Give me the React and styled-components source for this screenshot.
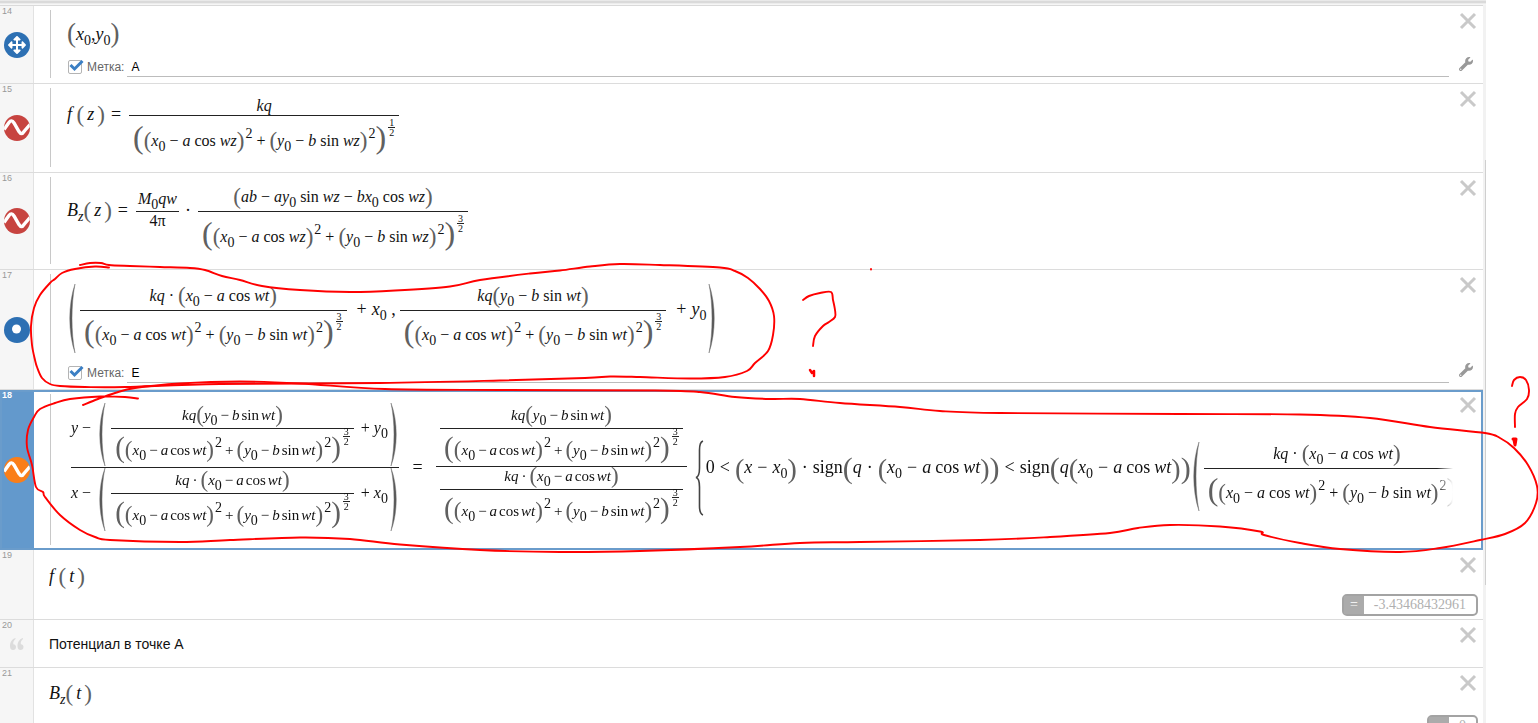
import React from "react";
import styled, { createGlobalStyle, css } from "styled-components";
import { FaArrowsAlt, FaWrench } from "react-icons/fa";

const GlobalStyle = createGlobalStyle`
  * { box-sizing: border-box; }
  body { margin: 0; background: #fff; font-family: "Liberation Sans", Arial, sans-serif; }
`;

/* ---------- page ---------- */

const Page = styled.div`
  position: relative;
  height: 100vh;
  overflow: hidden;
  display: grid;
  grid-template-columns: minmax(0, 1fr) 3px 52px;
  grid-template-rows: 5px 1fr;
`;

const TopEdge = styled.div`
  background: linear-gradient(#e9e9e9 0 1px, #dadada 1px 3px, #ececec 3px 4px, #f6f6f6 4px);
  grid-column: 1 / 3;
`;

const List = styled.ol`
  list-style: none;
  margin: 0;
  padding: 0;
  grid-column: 1;
  border-top: 1px solid #dadada;
`;

const ScrollTrack = styled.div`
  background: #f2f2f2;
`;

const ScrollThumb = styled.div`
  margin: 155px 0 0 2px;
  width: 1px;
  height: 425px;
  background: #cfcfcf;
`;

const Row = styled.li`
  display: grid;
  grid-template-columns: 34px minmax(0, 1fr) 30px;
  grid-template-rows: 1fr auto;
  min-height: ${(p) => p.$h}px;
  border-bottom: ${(p) => (p.$last || p.$active ? "none" : "1px solid #dcdcdc")};
  ${(p) =>
    p.$active &&
    css`
      outline: 2px solid #6a9ccb;
      outline-offset: -2px;
    `}
`;

const Gutter = styled.div`
  grid-row: 1 / 3;
  display: grid;
  grid-template-rows: 1fr auto 1fr;
  justify-items: center;
  background: ${(p) => (p.$active ? "#6399cc" : "#f6f6f6")};
  border-right: 1px solid ${(p) => (p.$active ? "#6399cc" : "#e2e2e2")};
  color: ${(p) => (p.$active ? "#fff" : "#999")};
  font-weight: ${(p) => (p.$active ? "bold" : "normal")};
`;

const Num = styled.span`
  justify-self: start;
  padding-left: 2px;
  font-size: 9px;
  line-height: 10px;
`;

const Badge = styled.button`
  width: 26px;
  height: 26px;
  padding: 0;
  border: none;
  border-radius: 50%;
  background: ${(p) => p.$color};
  color: #fff;
  display: flex;
  align-items: center;
  justify-content: center;
  overflow: hidden;
`;

const Body = styled.div`
  grid-column: 2;
  display: flex;
  flex-direction: column;
  margin: ${(p) => (p.$folder ? "4px 0 5px 16px" : "0 0 0 15px")};
  padding: ${(p) => p.$pad}px 0 0 ${(p) => (p.$folder ? 16 : 0)}px;
  border-left: ${(p) => (p.$folder ? "1px solid #c8c8c8" : "none")};
  overflow: hidden;
  ${(p) => p.$fade && css`mask-image: linear-gradient(to left, transparent, #000 16px);`}
`;

const Tools = styled.div`
  grid-column: 3;
  grid-row: 1;
  display: flex;
  flex-direction: column;
  justify-content: space-between;
  align-items: flex-start;
  padding: 6px 0 10px 6px;
`;

const IconButton = styled.button`
  border: none;
  background: none;
  padding: 0;
  width: ${(p) => p.$w || 18}px;
  height: 18px;
  display: flex;
  align-items: center;
  justify-content: center;
  color: ${(p) => p.$color};
`;

const LabelLine = styled.div`
  display: flex;
  align-items: center;
  height: 20px;
  margin: auto 4px 1px 1px;
`;

const CheckLabel = styled.label`
  display: flex;
  align-items: center;
  gap: 5px;
  font-size: 12px;
  color: #666;
`;

const Check = styled.input`
  appearance: none;
  margin: 0;
  width: 14px;
  height: 14px;
  border: 1px solid #b4b4b4;
  border-radius: 2px;
  background: #fff;
`;

const CheckBox = styled.span`
  position: relative;
  display: flex;
  svg { position: absolute; left: 1px; top: 0; pointer-events: none; }
`;

const NameInput = styled.input`
  flex: 1;
  height: 20px;
  margin-left: 3px;
  padding: 0 4px;
  border: none;
  border-bottom: 1px solid #bcbcbc;
  background: none;
  font: 12px "Liberation Sans", Arial, sans-serif;
  color: #000;
`;

const Result = styled.output`
  grid-column: 2 / 4;
  justify-self: end;
  display: flex;
  height: 22px;
  margin: 0 5px 3px 0;
  border: 2px solid #a3a3a3;
  border-radius: 5px;
  font: 14px/18px "Liberation Serif", serif;
  color: #b0b0b0;
`;

const Equals = styled.span`
  width: 20px;
  background: #ababab;
  color: #fff;
  text-align: center;
`;

const ResultValue = styled.span`
  padding: 0 10px;
`;

const Note = styled.p`
  margin: 0;
  font-size: 14px;
  line-height: 18px;
  color: #111;
`;

/* ---------- math ---------- */

const MathLine = styled.div`
  --op: 5px;
  --fn: 4px;
  white-space: nowrap;
  font: 18px/20px "Liberation Serif", "Times New Roman", serif;
  color: #111;
`;

const V = styled.i``;

const Arg = styled.i`
  margin: 0 3px;
`;

const Fn = styled.span`
  margin: 0 var(--fn);
`;

const Op = styled.span`
  margin: 0 var(--op);
`;

const Rel = styled.span`
  margin: 0 ${(p) => p.$r || 8}px 0 ${(p) => p.$l || 6}px;
`;

const Sub = styled.span`
  font-size: 14px;
  line-height: 0;
  vertical-align: -5px;
`;

const Sup = styled.span`
  font-size: 14px;
  line-height: 0;
  vertical-align: 8px;
  margin-left: 1px;
`;

const P = styled.span`
  font-size: ${(p) => p.$s || 23}px;
  line-height: 0;
  vertical-align: ${(p) => p.$v || -2}px;
  color: #606060;
`;

const FracBox = styled.span`
  --op: ${(p) => (p.$size < 16 ? 3 : 4)}px;
  --fn: ${(p) => (p.$size < 16 ? 2 : 4)}px;
  display: inline-grid;
  font-size: ${(p) => p.$size}px;
  line-height: 16px;
  text-align: center;
  vertical-align: ${(p) => p.$raise}px;
  margin: 0 ${(p) => p.$gap}px;
`;

const Top = styled.span`
  padding: 0 ${(p) => p.$side}px ${(p) => p.$pad}px;
  border-bottom: 1px solid #222;
`;

const Bottom = styled.span`
  padding: ${(p) => p.$pad}px ${(p) => p.$side}px 0;
`;

const PowerBox = styled.span`
  display: inline-grid;
  font-size: 10px;
  line-height: 9px;
  vertical-align: 20px;
  margin: -20px 0 -20px 2px;
`;

const PowerTop = styled.span`
  padding: 0 1px;
  border-bottom: 1px solid #222;
`;

const Tall = styled.svg`
  display: inline-block;
  vertical-align: ${(p) => p.$v}px;
  margin: ${(p) => p.$m || "0 2px"};
`;

function Frac({ num, den, up = 9, down = 30, size = 16, gap = 0, side = 4 }) {
  return (
    <FracBox $size={size} $raise={up + 5} $gap={gap}>
      <Top $pad={up - 3} $side={side}>{num}</Top>
      <Bottom $pad={down - 13} $side={side}>{den}</Bottom>
    </FracBox>
  );
}

function NestedFrac({ num, den, raise, above, below, side = 0 }) {
  return (
    <FracBox $size={16} $raise={raise} $gap={4}>
      <Top $pad={above} $side={side}>{num}</Top>
      <Bottom $pad={below} $side={side}>{den}</Bottom>
    </FracBox>
  );
}

function Power({ n }) {
  return (
    <PowerBox>
      <PowerTop>{n}</PowerTop>
      <span>2</span>
    </PowerBox>
  );
}

function TallParen({ h, v, right, m }) {
  const d = `M6 0C-1 ${h * 0.3} -1 ${h * 0.7} 6 ${h}C2 ${h * 0.7} 2 ${h * 0.3} 6 0Z`;
  return (
    <Tall width="7" height={h} $v={v} $m={m} role="img" aria-label={right ? ")" : "("}>
      <path d={d} fill="#555" stroke="#777" strokeWidth=".5" transform={right ? "matrix(-1 0 0 1 7 0)" : undefined} />
    </Tall>
  );
}

function Brace() {
  return (
    <Tall width="9" height="76" $v={-43} $m="0 2px 0 4px" role="img" aria-label="{">
      <path d="M8 1C5 2 4.500 5 4.500 10V28C4.500 34 3 37 1 37.500C3 38 4.500 41 4.500 47V66C4.500 71 5 74 8 75" fill="none" stroke="#444" strokeWidth="1.600" />
    </Tall>
  );
}

const X0 = () => (<><V>x</V><Sub>0</Sub></>);
const Y0 = () => (<><V>y</V><Sub>0</Sub></>);
const XDiff = ({ v }) => (<><X0 /><Op>−</Op><V>a</V><Fn>cos</Fn><V>w{v}</V></>);
const YDiff = ({ v }) => (<><Y0 /><Op>−</Op><V>b</V><Fn>sin</Fn><V>w{v}</V></>);

function Distance({ v, n, small }) {
  const outer = small ? 29 : 32;
  return (
    <>
      <P $s={outer}>(</P><P>(</P><XDiff v={v} /><P>)</P><Sup>2</Sup>
      <Op>+</Op>
      <P>(</P><YDiff v={v} /><P>)</P><Sup>2</Sup><P $s={outer}>)</P><Power n={n} />
    </>
  );
}

const KqX = () => (<><V>kq</V><Op>·</Op><P>(</P><XDiff v="t" /><P>)</P></>);
const KqY = () => (<><V>kq</V><P>(</P><YDiff v="t" /><P>)</P></>);

const FieldX = ({ small, gap }) => (
  <Frac num={<KqX />} den={<Distance v="t" n="3" small={small} />} size={small ? 15 : 16} up={small ? 8 : 9} down={small ? 26 : 29} gap={gap} />
);
const FieldY = ({ small, gap }) => (
  <Frac num={<KqY />} den={<Distance v="t" n="3" small={small} />} size={small ? 15 : 16} up={small ? 8 : 9} down={small ? 26 : 29} gap={gap} />
);

/* ---------- icons ---------- */

const Wave = () => (
  <svg width="26" height="26" viewBox="0 0 26 26" aria-hidden="true">
    <path d="M0 14.500L5 7.500Q7.500 4 10 8L15 16.500Q17.500 20.500 20 16.500L26 9.500" fill="none" stroke="#fff" strokeWidth="3.400" />
  </svg>
);

const Point = () => (
  <svg width="26" height="26" aria-hidden="true"><circle cx="12.500" cy="12" r="4.500" fill="#fff" /></svg>
);

const Quote = () => (
  <svg width="14" height="12" viewBox="0 0 14 12" aria-hidden="true">
    <path d="M5.500 0C2 1 0 4 0 8C0 10.500 1 12 3 12C4.800 12 6 10.700 6 9C6 7.300 4.900 6.200 3.300 6.200C3 4 4 2 5.500 1ZM13 0C9.500 1 7.500 4 7.500 8C7.500 10.500 8.500 12 10.500 12C12.300 12 13.500 10.700 13.500 9C13.500 7.300 12.400 6.200 10.800 6.200C10.500 4 11.500 2 13 1Z" fill="#dcdcdc" />
  </svg>
);

const Cross = () => (
  <svg width="18" height="18" viewBox="0 0 18 18" aria-hidden="true">
    <path d="M2 2L16 16M16 2L2 16" stroke="currentColor" strokeWidth="3" />
  </svg>
);

const Tick = () => (
  <svg width="15" height="12" viewBox="0 0 15 12" aria-hidden="true">
    <path d="M1.500 5L5.500 9L13.500 1" fill="none" stroke="#3b7fc4" strokeWidth="3" />
  </svg>
);

/* ---------- rows ---------- */

function PointLabel({ id, value }) {
  return (
    <LabelLine>
      <CheckLabel>
        <CheckBox><Check type="checkbox" defaultChecked /><Tick /></CheckBox>
        Метка:
      </CheckLabel>
      <NameInput id={id} aria-label="Метка" defaultValue={value} />
    </LabelLine>
  );
}

function Expression({ n, h, pad, icon, color, folder, fade, active, last, wrench, result, children }) {
  return (
    <Row $h={h} $active={active} $last={last}>
      <Gutter $active={active}>
        <Num>{n}</Num>
        {color ? <Badge $color={color} aria-label={"Expression " + n}>{icon}</Badge> : icon}
      </Gutter>
      <Body $folder={folder} $pad={pad} $fade={fade}>{children}</Body>
      <Tools>
        <IconButton $color="#c9c9c9" aria-label="Close"><Cross /></IconButton>
        {wrench && <IconButton $w={14} $color="#999" aria-label="Settings"><FaWrench size={16} /></IconButton>}
      </Tools>
      {result && <Result><Equals>=</Equals><ResultValue>{result}</ResultValue></Result>}
    </Row>
  );
}

/* ---------- freehand notes ---------- */

const Ink = styled.svg`
  position: absolute;
  left: 0;
  top: 0;
  pointer-events: none;
`;

const strokes = [
  [[80,265],[90,263],[101,263],[109,265],[130,266],[160,267],[190,268],[205,270],[222,276],[240,280],[262,286],[300,290],[350,292],[395,290.5],[450,286.5],[480,280],[530,273.5],[560,270.5],[590,266.5],[620,264],[660,265],[720,267.5],[735,271],[748,278],[760,289],[769,301],[774,316],[773,335],[768,351],[755,363],[747,371],[725,377],[690,378.5],[640,377],[610,376.5],[585,378],[500,380.5],[380,383],[220,384],[125,387],[85,387],[60,386],[50,384],[42,378],[37,367],[35,360],[32,345],[31,326],[34,308],[40,295],[50,283],[55,279],[62,273],[75,269],[95,266.5],[109,267.5]],
  [[83,405],[98,399],[115,393],[135,388],[180,383.5],[240,381.5],[300,383.5],[385,389],[500,390],[655,390.5],[700,392],[735,397],[770,399],[800,399],[840,403],[900,407],[940,411],[1000,413],[1180,414],[1300,414.5],[1370,418],[1430,427],[1485,433],[1500,438],[1514,448],[1528,465],[1537,486],[1536,503],[1525,523],[1505,534],[1480,540],[1440,548],[1400,552],[1340,549],[1300,543],[1264,535],[1260,531.5],[1220,526.5],[1170,525],[1138,528],[1110,533],[1050,537],[980,540],[860,542],[800,543],[740,547],[640,551],[560,552],[480,550],[400,544.5],[350,539],[300,537.5],[230,540],[180,542],[110,540],[95,537],[80,530],[60,515],[45,497],[43,492],[36,487],[32,465],[27,447],[28,430],[34,417],[40,409],[55,403],[70,399],[100,396.5],[125,397],[138,398.5]],
  [[803,300],[809,296],[820,293],[831,292],[833,300],[835,310],[835,317],[829,322],[823,326],[815,336],[813,346]],
  [[1512,386],[1514,380],[1520,377],[1526,380],[1529,390],[1527,399],[1518,407],[1515,414],[1515,427]],
];

const curve = (pts) =>
  pts.reduce((d, p, i) => {
    if (i === 0) return `M${p[0]} ${p[1]}`;
    const a = pts[i - 1];
    const z = pts[i - 2] || a;
    const n = pts[i + 1] || p;
    return `${d}C${a[0] + (p[0] - z[0]) / 6} ${a[1] + (p[1] - z[1]) / 6} ${p[0] - (n[0] - a[0]) / 6} ${p[1] - (n[1] - a[1]) / 6} ${p[0]} ${p[1]}`;
  }, "");

function Notes() {
  return (
    <Ink width="1538" height="723" viewBox="0 0 1538 723" fill="none" stroke="#f00" strokeWidth="1.900" strokeLinecap="round" strokeLinejoin="round" aria-hidden="true">
      {strokes.map((s, i) => <path key={i} d={curve(s)} />)}
      <path d="M810 370L812 373L814 371L814 376" strokeWidth="2.500" />
      <path d="M1513 439L1516 439L1515 445L1514 440" strokeWidth="3" />
      <path d="M871 269V269.500" />
    </Ink>
  );
}

export default function App() {
  return (
    <>
      <GlobalStyle />
      <Page>
        <TopEdge />
        <List>
          <Expression n="14" h={78} pad={14} folder wrench color="#2d70b3" icon={<FaArrowsAlt size={18} />}>
            <MathLine><P $s={27}>(</P><X0 />,<Y0 /><P $s={27}>)</P></MathLine>
            <PointLabel id="label-a" value="A" />
          </Expression>
          <Expression n="15" h={89} pad={10} folder color="#c74440" icon={<Wave />}>
            <MathLine>
              <V>f</V> <P>(</P><Arg>z</Arg><P>)</P><Rel>=</Rel>
              <Frac num={<V>kq</V>} den={<Distance v="z" n="1" />} up={4} />
            </MathLine>
          </Expression>
          <Expression n="16" h={97} pad={12} folder color="#c74440" icon={<Wave />}>
            <MathLine>
              <V>B</V><Sub><V>z</V></Sub><P>(</P><Arg>z</Arg><P>)</P><Rel>=</Rel>
              <Frac up={7} down={14} side={2} num={<><V>M</V><Sub>0</Sub><V>qw</V></>} den="4π" />
              <Rel $l={6} $r={7}>·</Rel>
              <Frac
                num={<><P>(</P><V>ab</V><Op>−</Op><V>ay</V><Sub>0</Sub><Fn>sin</Fn><V>wz</V><Op>−</Op><V>bx</V><Sub>0</Sub><Fn>cos</Fn><V>wz</V><P>)</P></>}
                den={<Distance v="z" n="3" />}
              />
            </MathLine>
          </Expression>
          <Expression n="17" h={120} pad={10} folder wrench color="#2d70b3" icon={<Point />}>
            <MathLine>
              <TallParen h={69} v={-38} m="0 0 0 2px" />
              <FieldX gap={4} /><Rel $r={5}>+</Rel><X0 /> ,<FieldY gap={4} /><Rel $r={5}>+</Rel><Y0 />
              <TallParen h={69} v={-38} right />
            </MathLine>
            <PointLabel id="label-e" value="E" />
          </Expression>
          <Expression n="18" h={160} pad={9} folder fade active color="#fa7e19" icon={<Wave />}>
            <MathLine>
              <NestedFrac
                raise={40}
                above={1}
                below={0}
                num={<><V>y</V><Op>−</Op><TallParen h={63} v={-33} m="0 2px 0 4px" /><FieldY small gap={3} /><Op>+</Op><Y0 /><TallParen h={63} v={-33} right /></>}
                den={<><V>x</V><Op>−</Op><TallParen h={63} v={-33} m="0 2px 0 4px" /><FieldX small gap={3} /><Op>+</Op><X0 /><TallParen h={63} v={-33} right /></>}
              />
              <Op>&nbsp;=&nbsp;</Op>
              <NestedFrac raise={40} above={8} below={1} side={4} num={<FieldY small />} den={<FieldX small />} />
              <Brace />
              0<Op>&lt;</Op><P $s={28} $v={-5}>(</P><V>x</V><Op>−</Op><X0 /><P $s={28} $v={-5}>)</P><Op>·</Op>
              sign<P $s={30} $v={-5}>(</P><V>q</V><Op>·</Op><P $s={28} $v={-5}>(</P><XDiff v="t" /><P $s={28} $v={-5}>)</P><P $s={30} $v={-5}>)</P>
              <Op>&lt;</Op>
              sign<P $s={30} $v={-5}>(</P><V>q</V><P $s={28} $v={-5}>(</P><XDiff v="t" /><P $s={28} $v={-5}>)</P><P $s={30} $v={-5}>)</P>
              <TallParen h={69} v={-38} />
              <FieldX gap={2} />
            </MathLine>
          </Expression>
          <Expression n="19" h={70} pad={16} result="-3.43468432961">
            <MathLine><V>f</V> <P>(</P><Arg>t</Arg><P>)</P></MathLine>
          </Expression>
          <Expression n="20" h={48} pad={15} icon={<Quote />}>
            <Note>Потенциал в точке А</Note>
          </Expression>
          <Expression n="21" h={72} pad={15} last result="0">
            <MathLine><V>B</V><Sub><V>z</V></Sub><P>(</P><Arg>t</Arg><P>)</P></MathLine>
          </Expression>
        </List>
        <ScrollTrack><ScrollThumb /></ScrollTrack>
        <Notes />
      </Page>
    </>
  );
}
